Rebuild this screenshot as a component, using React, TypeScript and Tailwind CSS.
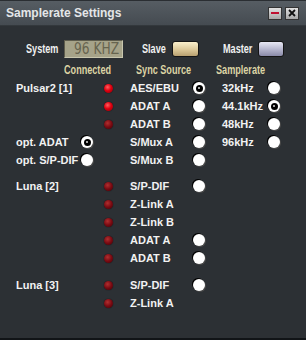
import React from "react";

function Narrow({ children, w, s = "scale-x-[0.76]" }: { children: React.ReactNode; w: string; s?: string }) {
  return (
    <div className={w + " shrink-0 whitespace-nowrap overflow-visible"}>
      <span className={"inline-block origin-left " + s}>{children}</span>
    </div>
  );
}

function Radio({ on }: { on?: boolean }) {
  return (
    <div className="w-[12px] h-[12px] rounded-full bg-white shadow-[-1px_-1px_0_#000,1px_1px_0_#4a4a4a] flex items-center justify-center">
      {on && (
        <div className="w-[7px] h-[7px] rounded-full bg-black flex items-center justify-center">
          <div className="w-[2px] h-[2px] rounded-full bg-[#ddd]" />
        </div>
      )}
    </div>
  );
}

function Led({ bright }: { bright?: boolean }) {
  return (
    <div
      className={
        bright
          ? "w-[9px] h-[9px] rounded-full bg-[radial-gradient(circle_at_40%_35%,#ff6060_0%,#e00010_45%,#800008_100%)] shadow-[0_0_1px_#000]"
          : "w-[9px] h-[9px] rounded-full bg-[radial-gradient(circle_at_40%_35%,#b03030_0%,#7a0a12_50%,#400006_100%)] shadow-[0_0_1px_#000]"
      }
    />
  );
}

type Row = {
  label?: string;
  opt?: "on" | "off";
  led?: "bright" | "dim";
  sync?: string;
  syncRadio?: "on" | "off";
  rate?: string;
  rateRadio?: "on" | "off";
};

function RowView({ r }: { r: Row }) {
  return (
    <div className="flex items-center h-[18px]">
      <div className="w-[16px] shrink-0" />
      <div className="w-[64px] shrink-0 whitespace-nowrap">{r.label}</div>
      <div className="w-[14px] shrink-0 flex justify-center">{r.opt && <Radio on={r.opt === "on"} />}</div>
      <div className="w-[8px] shrink-0" />
      <div className="w-[13px] shrink-0 flex justify-center">{r.led && <Led bright={r.led === "bright"} />}</div>
      <div className="w-[15px] shrink-0" />
      <div className="w-[62px] shrink-0 whitespace-nowrap">{r.sync}</div>
      <div className="w-[14px] shrink-0 flex justify-center">{r.syncRadio && <Radio on={r.syncRadio === "on"} />}</div>
      <div className="w-[16px] shrink-0" />
      <div className="w-[45px] shrink-0 whitespace-nowrap">{r.rate}</div>
      <div className="w-[14px] shrink-0 flex justify-center">{r.rateRadio && <Radio on={r.rateRadio === "on"} />}</div>
    </div>
  );
}

const group1: Row[] = [
  { label: "Pulsar2 [1]", led: "bright", sync: "AES/EBU", syncRadio: "on", rate: "32kHz", rateRadio: "off" },
  { led: "bright", sync: "ADAT A", syncRadio: "off", rate: "44.1kHz", rateRadio: "on" },
  { led: "dim", sync: "ADAT B", syncRadio: "off", rate: "48kHz", rateRadio: "off" },
  { label: "opt. ADAT", opt: "on", sync: "S/Mux A", syncRadio: "off", rate: "96kHz", rateRadio: "off" },
  { label: "opt. S/P-DIF", opt: "off", sync: "S/Mux B", syncRadio: "off" },
];
const group2: Row[] = [
  { label: "Luna [2]", led: "dim", sync: "S/P-DIF", syncRadio: "off" },
  { led: "dim", sync: "Z-Link A" },
  { led: "dim", sync: "Z-Link B" },
  { led: "dim", sync: "ADAT A", syncRadio: "off" },
  { led: "dim", sync: "ADAT B", syncRadio: "off" },
];
const group3: Row[] = [
  { label: "Luna [3]", led: "dim", sync: "S/P-DIF", syncRadio: "off" },
  { led: "dim", sync: "Z-Link A" },
];

export default function App() {
  return (
    <div
      className="w-[306px] h-[340px] flex flex-col bg-[#2c3034] border-b-[2px] border-[#111417] overflow-hidden"
      style={{ fontFamily: '"Liberation Sans", Arial, sans-serif' }}
    >
      <div className="h-[26px] shrink-0 flex items-center justify-between pl-[6px] pr-[7px] bg-[linear-gradient(#565d63,#454b51)] border-t border-[#2a2e32] border-b border-b-[#33383c]">
        <span className="text-[12px] font-bold text-[#e4e6e8]">Samplerate Settings</span>
        <div className="flex gap-[3px]">
          <div className="w-[14px] h-[13px] bg-[linear-gradient(#e0e0e0,#a8a8a8)] border border-[#333] flex items-center justify-center">
            <div className="w-[8px] h-[2px] bg-[#c01030]" />
          </div>
          <div className="w-[14px] h-[13px] bg-[linear-gradient(#e0e0e0,#a8a8a8)] border border-[#333] flex items-center justify-center">
            <svg width="8" height="8" viewBox="0 0 8 8">
              <path d="M1 1 L7 7 M7 1 L1 7" stroke="#111" strokeWidth="1.8" />
            </svg>
          </div>
        </div>
      </div>

      <div className="flex items-center h-[19px] mt-[13px] text-[12px] font-bold text-[#f0f0f0]">
        <div className="w-[26px] shrink-0" />
        <Narrow w="w-[38px]">System</Narrow>
        <div className="w-[59px] h-[18px] shrink-0 bg-[#a6a389] border-t border-l border-[#5e5c4c] border-r border-b border-r-[#c8c6ae] border-b-[#c8c6ae] flex items-center justify-end pr-[3px]">
          <span
            className="inline-block whitespace-nowrap text-[16px] font-extralight text-[#66644f] leading-none origin-right scale-x-[0.85]"
            style={{ fontFamily: '"DejaVu Sans Condensed", "DejaVu Sans", sans-serif' }}
          >
            96 KHZ
          </span>
        </div>
        <div className="w-[19px] shrink-0" />
        <Narrow w="w-[30px]">Slave</Narrow>
        <div className="w-[27px] h-[16px] shrink-0 rounded-[3px] border border-[#151515] bg-[linear-gradient(#fbf0cc,#dcc898_55%,#b8a070)]" />
        <div className="w-[24px] shrink-0" />
        <Narrow w="w-[35px]">Master</Narrow>
        <div className="w-[26px] h-[16px] shrink-0 rounded-[3px] border border-[#151515] bg-[linear-gradient(#e8e8f4,#b4b4cc_55%,#8a8aa8)]" />
      </div>

      <div className="flex items-center h-[18px] mt-[3px] text-[13px] font-bold text-[#dcd4a4]">
        <div className="w-[64px] shrink-0" />
        <Narrow w="w-[72px]" s="scale-x-[0.7]">Connected</Narrow>
        <Narrow w="w-[80px]" s="scale-x-[0.7]">Sync Source</Narrow>
        <Narrow w="w-[60px]" s="scale-x-[0.7]">Samplerate</Narrow>
      </div>

      <div className="flex flex-col text-[11px] font-bold text-[#f2f2f2]">
        {group1.map((r, i) => (
          <RowView key={"a" + i} r={r} />
        ))}
        <div className="h-[8px]" />
        {group2.map((r, i) => (
          <RowView key={"b" + i} r={r} />
        ))}
        <div className="h-[9px]" />
        {group3.map((r, i) => (
          <RowView key={"c" + i} r={r} />
        ))}
      </div>
    </div>
  );
}
